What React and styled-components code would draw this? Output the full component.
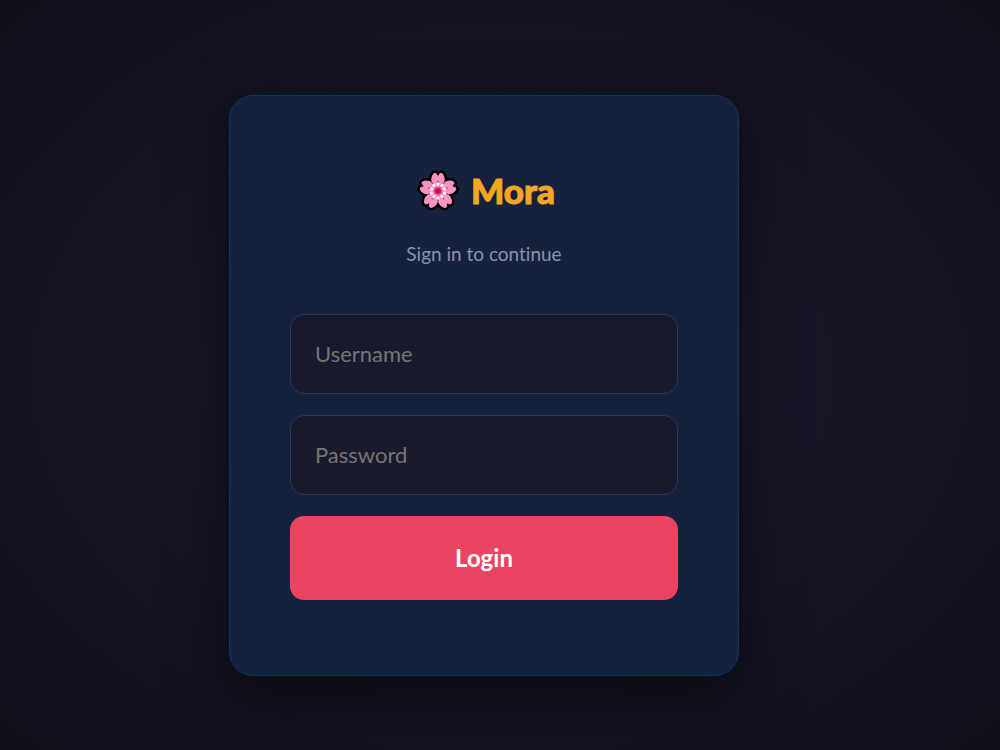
import React from "react";
import styled, { createGlobalStyle } from "styled-components";

const GlobalStyle = createGlobalStyle`
  *, *::before, *::after { box-sizing: border-box; }
  body {
    margin: 0;
    background: #0f0f1a;
    font-family: Lato, "Open Sans", sans-serif;
    font-variant-ligatures: none;
  }
`;

const Page = styled.main`
  display: flex;
  align-items: center;
  justify-content: center;
  min-height: 100vh;
  padding: 21px 32px 0 0;
  background: radial-gradient(ellipse at center, #1a1a2e 0%, #0f0f1a 100%);
`;

const Card = styled.section`
  width: 100%;
  max-width: 510px;
  padding: 74px 60px 75px;
  background: #16213e;
  border: 1px solid #0f3460;
  border-radius: 24px;
  box-shadow: 0 20px 60px rgba(0, 0, 0, 0.5);
`;

const Title = styled.h1`
  display: flex;
  align-items: flex-start;
  justify-content: center;
  gap: 12px;
  height: 42px;
  margin: 0;
  padding-left: 4px;
  color: #f5a623;
  font-size: 35px;
  font-weight: 900;
  line-height: 40px;
  -webkit-text-stroke: 1px #f5a623;
`;

const Subtitle = styled.p`
  margin: 30px 0 48px;
  color: #8892b0;
  font-size: 19px;
  font-weight: 400;
  line-height: 24px;
  text-align: center;
`;

const Form = styled.form`
  display: flex;
  flex-direction: column;
  gap: 21px;
`;

const Field = styled.input`
  width: 100%;
  height: 80px;
  padding: 0 24px 2px;
  color: #eaeaea;
  background: #1a1a2e;
  border: 1px solid #2a3a5e;
  border-radius: 14px;
  font-family: inherit;
  font-size: 22px;
  &::placeholder { color: #757575; opacity: 1; }
`;

const Submit = styled.button`
  height: 84px;
  padding: 0 0 2px;
  color: #fff;
  background: #e94560;
  border: 0;
  border-radius: 14px;
  font-family: inherit;
  font-size: 24px;
  font-weight: 700;
  cursor: pointer;
`;

const petal =
  "M0 0 L-5.5 -7 C-7.5 -11 -7 -15 -4 -18 L-2 -18 L0 -15 L2 -18 L4 -18 C7 -15 7.5 -11 5.5 -7Z";
const turns = [0, 72, 144, 216, 288];

function Blossom() {
  return (
    <svg width="42" height="42" viewBox="-21 -21 42 42" aria-hidden="true">
      <g fill="#000" stroke="#000" strokeWidth="5" strokeLinejoin="round">
        {turns.map((t) => <path key={t} d={petal} transform={`rotate(${t})`} />)}
      </g>
      <g fill="#f794c0">
        {turns.map((t) => <path key={t} d={petal} transform={`rotate(${t})`} />)}
        <circle r="9" />
      </g>
      {turns.map((t) => (
        <g key={t} transform={`rotate(${t})`}>
          <path d="M-1.5 -8h3l-.6 3.5h-1.8z" fill="#fff" />
          <circle cy="-9.5" r="0.9" fill="#e0387f" />
          <g transform="rotate(36)">
            <circle cy="-7" r="1.6" fill="#fff" />
            <circle cy="-9.5" r="0.9" fill="#e0387f" />
          </g>
        </g>
      ))}
      <circle r="5" fill="#f062a1" />
      <circle r="3" fill="#c2105b" />
    </svg>
  );
}

export default function App() {
  return (
    <>
      <GlobalStyle />
      <Page>
        <Card>
          <Title><Blossom />Mora</Title>
          <Subtitle>Sign in to continue</Subtitle>
          <Form onSubmit={(e) => e.preventDefault()}>
            <Field type="text" name="username" placeholder="Username" aria-label="Username" />
            <Field type="password" name="password" placeholder="Password" aria-label="Password" />
            <Submit type="submit">Login</Submit>
          </Form>
        </Card>
      </Page>
    </>
  );
}
